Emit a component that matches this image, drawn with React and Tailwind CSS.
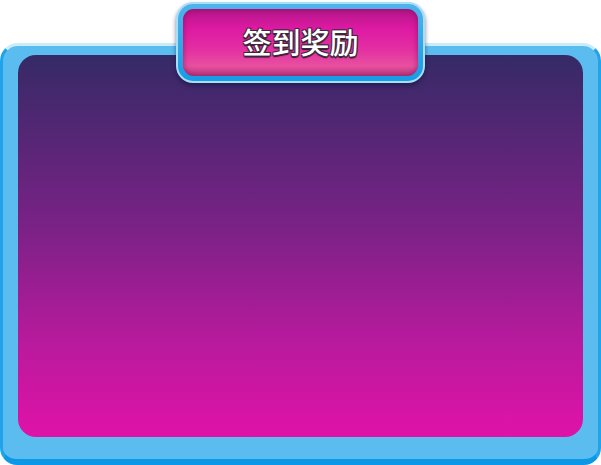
import React from "react";

function SignInTab() {
    return (
        <div className="absolute left-[176px] top-[2px] w-[249px] h-[81px] rounded-[17px] p-[2px] bg-[#a9def7] shadow-[0_3px_4px_rgba(20,20,60,0.55)]">
            <div className="h-full w-full rounded-[15px] p-[5px] bg-[linear-gradient(to_bottom,#4fb3ea,#179ce6)]">
                <div className="h-full w-full rounded-[11px] bg-[linear-gradient(to_bottom,#b3168a_0%,#de1aa3_30%,#e32fa2_60%,#e8509f_85%,#b93a80_100%)] shadow-[inset_0_0_6px_rgba(120,0,70,0.6)] flex items-center justify-center">
                    <span className="text-[29px] leading-none text-white font-medium font-['Noto_Sans_CJK_SC','Noto_Sans',sans-serif] [text-shadow:1px_1px_0_#3a2a3a,-1px_-1px_0_#3a2a3a,1px_-1px_0_#3a2a3a,-1px_1px_0_#3a2a3a,0_2px_1px_#2a1a2a] -mt-[3px]">
                        签到奖励
                    </span>
                </div>
            </div>
        </div>
    );
}

export default function App() {
    return (
        <div className="relative w-[601px] h-[465px] bg-white overflow-hidden">
            <div className="mt-[43px] h-[422px] rounded-t-[18px] rounded-b-[17px] bg-[#5bbcf0] border-x-[3px] border-b-[6px] border-t-[3px] border-x-[#1fa3ea] border-b-[#0c98e6] border-t-[#c9ecfb] pt-[9px] px-[15px] pb-[22px]">
                <div className="h-full w-full rounded-[18px] bg-[linear-gradient(to_bottom,#352a66_0%,#7a2286_45%,#b81a9d_75%,#e012a8_100%)]" />
            </div>
            <SignInTab />
        </div>
    );
}
